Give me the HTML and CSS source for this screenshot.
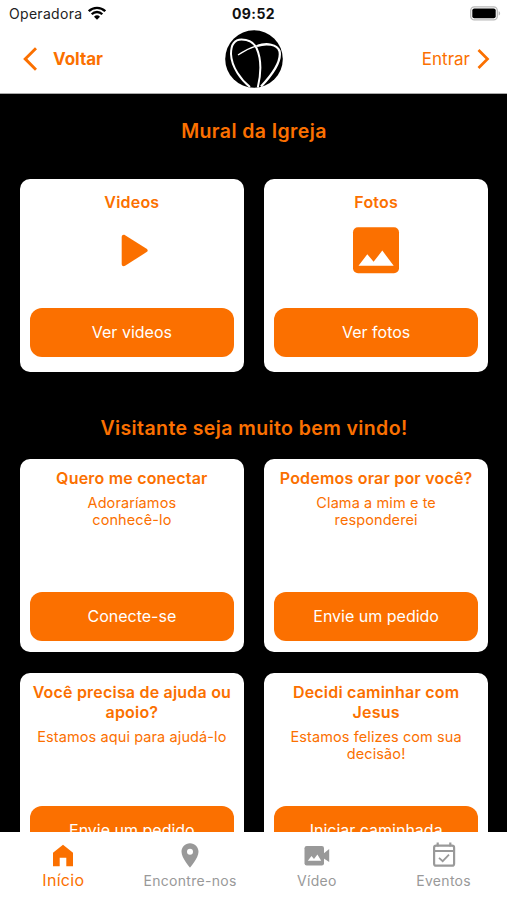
FILE: index.html
```html
<!DOCTYPE html>
<html lang="pt-BR">
<head>
  <meta charset="UTF-8" />
  <meta name="viewport" content="width=device-width, initial-scale=1.0" />
  <title>Mural da Igreja</title>
  <link rel="stylesheet" href="styles.css">
</head>
<body>

  <div class="status-bar">
    <div class="carrier">
      <span>Operadora</span>
      <svg width="18" height="14" viewBox="0 0 18 14" fill="none" stroke="#000" stroke-width="2.3">
        <path d="M0.8 5.2a11.6 11.6 0 0 1 16.4 0" />
        <path d="M3.7 8.2a7.5 7.5 0 0 1 10.6 0" />
        <path d="M9 13.8l-3-3.1a4.3 4.3 0 0 1 6 0z" fill="#000" stroke="none" />
      </svg>
    </div>
    <span class="time">09:52</span>
    <svg class="battery" width="31" height="15" viewBox="0 0 31 15">
      <rect x="0.7" y="0.9" width="26.6" height="13" rx="3.6" fill="#fff" stroke="#b9b9b9" stroke-width="1.3" />
      <rect x="2.3" y="2.5" width="23.4" height="9.8" rx="2" fill="#000" />
      <path d="M28.6 5.3c2 .7 2 3.6 0 4.3z" fill="#b9b9b9" />
    </svg>
  </div>

  <header class="header">
    <a class="back" href="#">
      <svg width="14" height="24" viewBox="0 0 14 24" fill="none" stroke="#fb7000" stroke-width="2.9">
        <path d="M13 1.2L2.2 11.9L13 22.7" />
      </svg>
      <span>Voltar</span>
    </a>
    <svg class="logo" width="58" height="58" viewBox="0 0 58 58">
      <circle cx="29" cy="29" r="28.8" fill="#000" />
      <g fill="none" stroke="#fff">
        <path d="M25 57C16 50 6.500 37 6 24C6 14 10 9.500 16.500 9.500C23 9.500 28.500 12 31.500 18C36 28 36.500 42 32.800 57.500" stroke-width="2" />
        <path d="M13 25C20 20 28 16 38 14.500" stroke-width="1.200" />
        <path d="M32 16C42 12.500 52 14.500 54.500 21C57 32 46 46 36 56.500" stroke-width="2.300" />
      </g>
    </svg>
    <a class="login" href="#">
      <span>Entrar</span>
      <svg width="13" height="20" viewBox="0 0 13 20" fill="none" stroke="#fb7000" stroke-width="2.7">
        <path d="M1.500 1L10.500 10L1.500 19" />
      </svg>
    </a>
  </header>

  <main class="content">
    <h2 class="section-title">Mural da Igreja</h2>
    <div class="cards media">
      <div class="card">
        <h3>Videos</h3>
        <svg width="62" height="62" viewBox="0 0 62 62" fill="#fb7000">
          <path d="M20.700 18v27c0 2 1.800 2.800 3.400 1.800l21.500-13.700c1.400-.9 1.400-2.500 0-3.400L24.100 16.200c-1.600-1-3.400-.2-3.400 1.800z" />
        </svg>
        <a class="btn" href="#">Ver videos</a>
      </div>
      <div class="card">
        <h3>Fotos</h3>
        <svg width="62" height="62" viewBox="0 0 62 62">
          <rect x="8" y="8.300" width="46" height="46" rx="5" fill="#fb7000" />
          <path d="M13.500 46.700L22.300 35.300L28.600 42.800L37.300 31.600L48.700 46.700z" fill="#fff" />
        </svg>
        <a class="btn" href="#">Ver fotos</a>
      </div>
    </div>

    <h2 class="section-title visitor-title">Visitante seja muito bem vindo!</h2>
    <div class="cards">
      <div class="card">
        <h3>Quero me conectar</h3>
        <p>Adoraríamos<br>conhecê-lo</p>
        <a class="btn" href="#">Conecte-se</a>
      </div>
      <div class="card">
        <h3>Podemos orar por você?</h3>
        <p>Clama a mim e te<br>responderei</p>
        <a class="btn" href="#">Envie um pedido</a>
      </div>
      <div class="card">
        <h3>Você precisa de ajuda ou<br>apoio?</h3>
        <p>Estamos aqui para ajudá-lo</p>
        <a class="btn" href="#">Envie um pedido</a>
      </div>
      <div class="card">
        <h3>Decidi caminhar com<br>Jesus</h3>
        <p>Estamos felizes com sua<br>decisão!</p>
        <a class="btn" href="#">Iniciar caminhada</a>
      </div>
    </div>
  </main>

  <nav class="tabs">
    <a class="tab active" href="#">
      <svg width="28" height="28" viewBox="0 0 28 28" fill="currentColor">
        <path d="M14 2.700L4 10.700V24.200h6.700V15.800h6.600v8.400H24V10.700z" />
      </svg>
      <span>Início</span>
    </a>
    <a class="tab" href="#">
      <svg width="28" height="28" viewBox="0 0 28 28" fill="currentColor" fill-rule="evenodd">
        <path d="M14 1.200c-4.800 0-8.500 3.700-8.500 8.500C5.500 16 14 25.500 14 25.500s8.500-9.500 8.500-15.800c0-4.800-3.700-8.500-8.500-8.500zm0 5.600a3 3 0 1 1 0 6a3 3 0 0 1 0-6z" />
      </svg>
      <span>Encontre-nos</span>
    </a>
    <a class="tab" href="#">
      <svg width="28" height="28" viewBox="0 0 28 28" fill="currentColor">
        <rect x="1.500" y="4" width="19.500" height="19.500" rx="2.200" />
        <path d="M20 12L26.200 7V20L20 16z" />
        <path d="M4.800 18.700L8.500 14L11 17L14.400 12.400L18.200 18.700z" fill="#fff" />
      </svg>
      <span>Vídeo</span>
    </a>
    <a class="tab" href="#">
      <svg width="28" height="28" viewBox="0 0 28 28" fill="none" stroke="currentColor" stroke-width="2.200">
        <rect x="4.100" y="3.700" width="20" height="20" rx="2" />
        <path d="M3.500 9H24.500M7.700 0.400V4.500M20.300 0.400V4.500" />
        <path d="M9 15.800L12.700 19.200L19 12.700" stroke-width="1.800" />
      </svg>
      <span>Eventos</span>
    </a>
  </nav>

</body>
</html>
```

FILE: styles.css
```css
* {
  box-sizing: border-box;
}

body {
  font-family: Inter, "Liberation Sans", sans-serif;
  background: #fff;
  color: #fb7000;
  display: flex;
  flex-direction: column;
  height: 900px;
  margin: 0;
  overflow: hidden;
}

a {
  color: inherit;
  text-decoration: none;
}

svg {
  display: block;
  flex-shrink: 0;
}

.status-bar {
  display: grid;
  grid-template-columns: 1fr auto 1fr;
  align-items: center;
  height: 28px;
  padding: 0 6px 2px 9px;
  color: #222;
  font-size: 14px;
}

.carrier {
  display: flex;
  align-items: center;
  gap: 6px;
  letter-spacing: 0.3px;
}

.time {
  margin-right: 3px;
  color: #111;
  font-weight: 700;
  letter-spacing: 0.4px;
}

.battery {
  justify-self: end;
}

.header {
  display: grid;
  grid-template-columns: 1fr auto 1fr;
  align-items: center;
  height: 66px;
  padding: 0 17px 4px 23px;
  border-bottom: 1px solid #aaa;
  font-size: 17px;
}

.back {
  display: flex;
  align-items: center;
  gap: 16px;
  font-weight: 700;
}

.logo {
  margin-right: 6px;
}

.login {
  display: flex;
  align-items: center;
  justify-content: flex-end;
  gap: 7px;
}

.content {
  flex: 1;
  min-height: 0;
  overflow: hidden;
  background: #000;
  padding: 25px 19px 0 20px;
}

.section-title {
  margin: 0;
  height: 24px;
  font-size: 19.500px;
  font-weight: 600;
  line-height: 24px;
  letter-spacing: 0.4px;
  text-align: center;
}

.visitor-title {
  margin-top: 43px;
  margin-bottom: 20px;
}

.cards {
  display: grid;
  grid-template-columns: 1fr 1fr;
  gap: 20.500px;
}

.media {
  margin-top: 36px;
}

.visitor-title + .cards {
  margin-top: -1px;
}

.media + .visitor-title {
  margin-top: 44px;
}

.card {
  display: flex;
  flex-direction: column;
  align-items: center;
  height: 193px;
  padding: 9px 10px 11px;
  border-radius: 10px;
  background: #fff;
  text-align: center;
}

.media .card {
  padding-top: 13px;
}

.card h3 {
  margin: 0;
  font-size: 16px;
  font-weight: 600;
  line-height: 20px;
  letter-spacing: 0.2px;
  white-space: nowrap;
}

.media svg {
  margin-top: 7px;
}

.card p {
  margin: 6px 0 0;
  font-size: 14.500px;
  line-height: 17px;
  letter-spacing: 0.1px;
  white-space: nowrap;
}

.btn {
  width: 100%;
  height: 49px;
  margin-top: auto;
  flex-shrink: 0;
  border-radius: 12px;
  background: #fb7000;
  color: #fff;
  font-size: 16px;
  line-height: 49px;
}

.media .btn {
  margin-bottom: 4px;
}

.tabs {
  display: grid;
  grid-template-columns: repeat(4, 1fr);
  height: 68px;
  flex-shrink: 0;
  background: #fff;
}

.tab {
  display: flex;
  flex-direction: column;
  align-items: center;
  padding-top: 10px;
  color: #999;
  font-size: 14px;
  letter-spacing: 0.3px;
}

.tab span {
  line-height: 22px;
}

.active {
  color: #fb7000;
}

.active span {
  margin-top: -1px;
  font-size: 16px;
}
```
